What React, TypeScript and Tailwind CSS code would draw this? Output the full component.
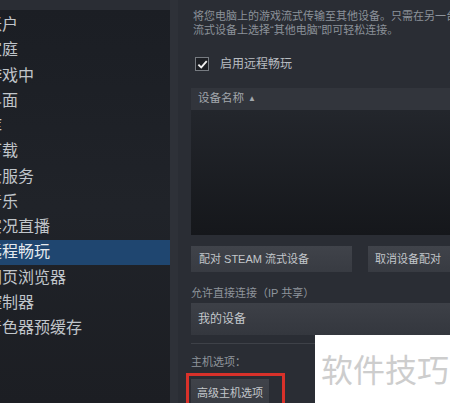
import React from "react";

const items = [
  "账户",
  "家庭",
  "游戏中",
  "界面",
  "库",
  "下载",
  "云服务",
  "音乐",
  "实况直播",
  "远程畅玩",
  "网页浏览器",
  "控制器",
  "着色器预缓存",
];

const font = { fontFamily: '"Liberation Sans", "Noto Sans CJK SC", sans-serif' };

const App = () => {
  return (
    <div
      className="relative flex w-[450px] h-[403px] overflow-hidden bg-[#2a2d34]"
      style={font}
    >
      {/* Sidebar */}
      <div className="w-[170px] shrink-0 mt-[10px] pt-[2.4px] flex flex-col overflow-hidden bg-gradient-to-b from-[#1b1e24] via-[#202329] to-[#1c1e23]">
        {items.map((t) => (
          <div
            key={t}
            className={
              t === "远程畅玩"
                ? "h-[25.25px] shrink-0 flex items-center bg-[#1f4670] text-[#e6ebef]"
                : "h-[25.25px] shrink-0 flex items-center text-[#c0c5ca]"
            }
          >
            <span className="-ml-[14px] text-[16px] leading-none whitespace-nowrap">{t}</span>
          </div>
        ))}
      </div>

      {/* Scroll strip */}
      <div className="w-[8px] shrink-0 bg-[#2e3138]" />

      {/* Main panel */}
      <div className="flex-1 min-w-0 pl-[13px] pt-[9px] flex flex-col overflow-hidden">
        <div className="text-[11px] leading-[14px] text-[#8c929a] whitespace-nowrap">
          <div className="ml-[2px]">将您电脑上的游戏流式传输至其他设备。只需在另一台</div>
          <div className="ml-[2px]">流式设备上选择“其他电脑”即可轻松连接。</div>
        </div>

        <div className="mt-[20px] h-[14px] flex items-center gap-[11px] ml-[4px]">
          <div className="w-[14px] h-[14px] border border-[#777b81] bg-[#1d1f24] flex items-center justify-center">
            <svg width="11" height="11" viewBox="0 0 12 12">
              <path d="M1.5 6.2 L4.6 9.2 L10.6 2.4" fill="none" stroke="#f2f2f2" strokeWidth="2" />
            </svg>
          </div>
          <span className="text-[12px] text-[#b9bdc2]">启用远程畅玩</span>
        </div>

        <div className="mt-[17px] h-[22px] w-[270px] shrink-0 bg-[#32353c] flex items-center pl-[7px] text-[11.5px] text-[#a2a7ad]">
          设备名称 <span className="ml-[4px] text-[8px]">▲</span>
        </div>
        <div className="h-[125px] w-[270px] shrink-0 bg-gradient-to-b from-[#23262c] to-[#15171b]" />

        <div className="mt-[11px] h-[26px] flex gap-[16px] shrink-0">
          <div className="w-[161px] shrink-0 bg-gradient-to-b from-[#40434a] to-[#383b42] flex items-center pl-[8px] text-[11px] text-[#c3c7cb]">
            配对 STEAM 流式设备
          </div>
          <div className="w-[120px] shrink-0 bg-gradient-to-b from-[#40434a] to-[#383b42] flex items-center pl-[7px] text-[11px] text-[#c3c7cb]">
            取消设备配对
          </div>
        </div>

        <div className="mt-[14px] text-[11px] leading-[14px] text-[#8f959c] whitespace-nowrap">
          允许直接连接（IP 共享）
        </div>
        <div className="mt-[3px] h-[32px] w-[270px] shrink-0 bg-gradient-to-b from-[#3d4047] to-[#34373e] flex items-center pl-[7px] text-[12px] text-[#c3c7cb]">
          我的设备
        </div>
        <div className="mt-[8px] h-px w-[270px] shrink-0 bg-[#3e4148]" />

        <div className="mt-[11px] text-[11px] leading-[14px] text-[#8f959c]">主机选项：</div>
        <div className="mt-[10px] h-[28px] w-[78px] shrink-0 bg-gradient-to-b from-[#40434a] to-[#383b42] flex items-center justify-center text-[11px] text-[#c3c7cb]">
          高级主机选项
        </div>
      </div>

      {/* Red annotation box */}
      <div className="absolute left-[186px] top-[373px] w-[99px] h-[40px] border-[3px] border-[#d8312a]" />

      {/* Watermark */}
      <div className="absolute left-[315px] top-[335px] right-0 bottom-0 bg-white pl-[6px] pt-[13px]">
        <span
          className="text-[32px] leading-[40px] text-[#cdcdcd] whitespace-nowrap"
          style={{ fontFamily: '"Noto Sans CJK SC", sans-serif' }}
        >
          软件技巧
        </span>
      </div>
    </div>
  );
};

export default App;
